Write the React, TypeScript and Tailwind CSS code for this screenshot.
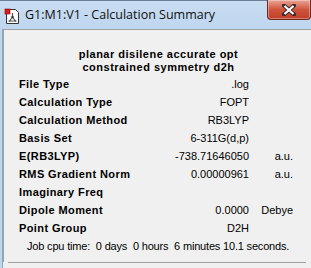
import React from 'react';

interface Row {
  label: string;
  value: string;
  unit?: string;
}

const rows: Row[] = [
  { label: 'File Type', value: '.log' },
  { label: 'Calculation Type', value: 'FOPT' },
  { label: 'Calculation Method', value: 'RB3LYP' },
  { label: 'Basis Set', value: '6-311G(d,p)' },
  { label: 'E(RB3LYP)', value: '-738.71646050', unit: 'a.u.' },
  { label: 'RMS Gradient Norm', value: '0.00000961', unit: 'a.u.' },
  { label: 'Imaginary Freq', value: '' },
  { label: 'Dipole Moment', value: '0.0000', unit: 'Debye' },
  { label: 'Point Group', value: 'D2H' },
];

const AppIcon = () => (
  <svg width="17" height="17" viewBox="0 0 17 17">
    <path d="M2.5 1.5h9l3 3v11h-12z" fill="#fff" stroke="#333" />
    <rect x="1" y="1" width="5" height="5" fill="#e41b1b" stroke="#7a0000" strokeWidth="0.6" />
    <path d="M8.5 5v4M8.5 9l-3 4M8.5 9l3 4M5.5 13h6" stroke="#555" strokeWidth="1.2" />
    <circle cx="8.5" cy="9" r="1.2" fill="#333" />
    <circle cx="5.5" cy="13" r="1" fill="#666" />
    <circle cx="11.5" cy="13" r="1" fill="#666" />
  </svg>
);

const CloseButton = () => (
  <div className="w-[44px] h-[20px] rounded-b-[4px] border border-t-0 border-[#6d2a22] bg-gradient-to-b from-[#e8a394] via-[#d0553e] to-[#c23c24] flex items-center justify-center shadow-[inset_0_0_0_1px_rgba(255,255,255,0.35)]">
    <svg width="14" height="12" viewBox="0 0 14 12">
      <path d="M2 1.5l10 9M12 1.5l-10 9" stroke="#3b2a2a" strokeWidth="4" strokeLinecap="square" />
      <path d="M2.5 2l9 8M11.5 2l-9 8" stroke="#fff" strokeWidth="2.2" />
    </svg>
  </div>
);

export default function App() {
  return (
    <div className="w-[311px] h-[268px] overflow-hidden bg-[#f0f0f0] flex flex-col font-['Liberation_Sans',Arial,sans-serif] text-black">
      {/* title bar */}
      <div className="h-[29px] shrink-0 bg-gradient-to-b from-[#c9dcf1] to-[#bed6ef] border-t border-[#6b7f99] flex items-start">
        <div className="pl-[4px] pt-[7px]">
          <AppIcon />
        </div>
        <div className="pl-[4px] pt-[6px] text-[12.5px] leading-[16px] font-['Open_Sans',sans-serif] text-[#111]">
          G1:M1:V1 - Calculation Summary
        </div>
        <div className="ml-auto -mt-px">
          <CloseButton />
        </div>
      </div>

      <div className="flex flex-1 min-h-0">
        {/* window frame left */}
        <div className="w-[3px] shrink-0 bg-[#bed6ef] border-r border-[#8da6c4]" />
        <div className="flex-1 flex flex-col bg-[#f0f0f0]">
          <div className="h-[233px] border-t border-l border-[#a0a0a0] pt-[18px] flex flex-col">
            <div className="text-center font-bold text-[11px] leading-[13px] tracking-[0.5px] pl-[2px]">
              <div>planar disilene accurate opt</div>
              <div>constrained symmetry d2h</div>
            </div>
            <div className="mt-px flex flex-col">
              {rows.map((r) => (
                <div key={r.label} className="h-[18px] leading-[18px] text-[11px] flex">
                  <div className="w-[148px] pl-[15px] font-bold tracking-[0.4px]">{r.label}</div>
                  <div className="w-[97px] text-right">{r.value}</div>
                  <div className="w-[44px] text-right">{r.unit}</div>
                </div>
              ))}
              <div className="h-[18px] leading-[18px] text-[11px] pl-[23px] whitespace-pre tracking-[-0.18px]">
                Job cpu time:  0 days  0 hours  6 minutes 10.1 seconds.
              </div>
            </div>
          </div>
          <div className="ml-[5px] mr-[5px] border-t border-[#a0a0a0]" />
        </div>
      </div>
    </div>
  );
}
